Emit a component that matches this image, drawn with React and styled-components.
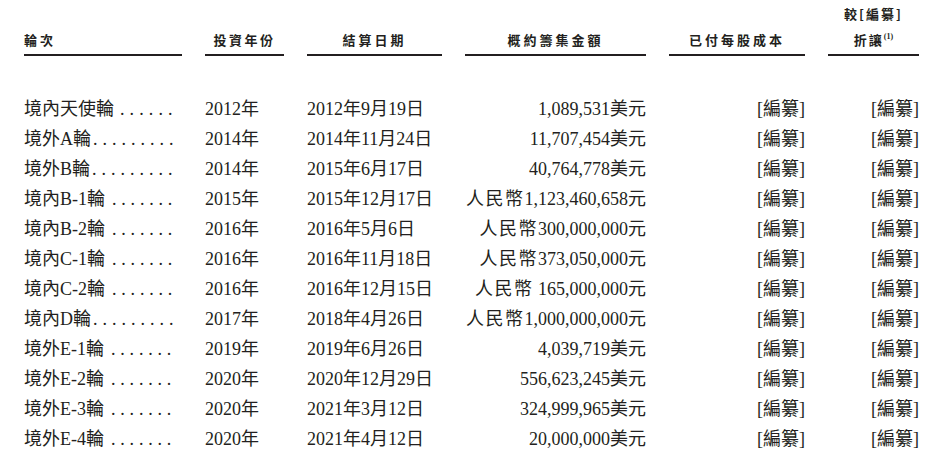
import React from 'react';
import styled, { createGlobalStyle } from 'styled-components';

const GlobalStyle = createGlobalStyle`
    body {
        margin: 0;
        background: #ffffff;
        color: #231f20;
        font-family: "Liberation Serif", "Noto Sans CJK TC", serif;
    }
`

const COLS = '158px 79px 135px 181px 136px 91px';

const Page = styled.div`
    padding: 1px 0 0 24px;
`

const HeaderRow = styled.div`
    display: grid;
    grid-template-columns: ${COLS};
    column-gap: 23px;
    align-items: end;
`

const HeadCell = styled.div`
    border-bottom: 2px solid #231f20;
    padding-bottom: 1px;
    font-family: "Noto Sans CJK TC", sans-serif;
    font-weight: 700;
    font-size: 13px;
    line-height: 26px;
    letter-spacing: ${p => p.$spacing || 3}px;
    text-align: ${p => p.$align || 'center'};
    white-space: nowrap;
`

const Sup = styled.sup`
    font-family: "Liberation Serif", serif;
    font-size: 8px;
    letter-spacing: 0;
    vertical-align: 6px;
    line-height: 0;
`

const Body = styled.div`
    margin-top: 36px;
`

const Row = styled.div`
    display: grid;
    grid-template-columns: ${COLS};
    column-gap: 23px;
    height: 30px;
    align-items: center;
    font-size: 18px;
    white-space: nowrap;
`

const Cell = styled.div`
    text-align: ${p => p.$align || 'left'};
`

const Dots = styled.span`
    margin-left: ${p => p.$gap}px;
    letter-spacing: ${p => p.$spacing}px;
`

const Currency = styled.span`
    letter-spacing: 1.5px;
`

const rows = [
    ['境內天使輪', 6, 6, 5.1, '2012年', '2012年9月19日', '', '1,089,531美元'],
    ['境外A輪', 9, 2, 5, '2014年', '2014年11月24日', '', '11,707,454美元'],
    ['境外B輪', 9, 2, 5, '2014年', '2015年6月17日', '', '40,764,778美元'],
    ['境內B-1輪', 7, 7, 4.8, '2015年', '2015年12月17日', '人民幣', '1,123,460,658元'],
    ['境內B-2輪', 7, 7, 4.8, '2016年', '2016年5月6日', '人民幣', '300,000,000元'],
    ['境內C-1輪', 7, 7, 4.8, '2016年', '2016年11月18日', '人民幣', '373,050,000元'],
    ['境內C-2輪', 7, 7, 4.8, '2016年', '2016年12月15日', '人民幣', ' 165,000,000元'],
    ['境內D輪', 9, 2, 5, '2017年', '2018年4月26日', '人民幣', '1,000,000,000元'],
    ['境外E-1輪', 7, 7, 4.8, '2019年', '2019年6月26日', '', '4,039,719美元'],
    ['境外E-2輪', 7, 7, 4.8, '2020年', '2020年12月29日', '', '556,623,245美元'],
    ['境外E-3輪', 7, 7, 4.8, '2020年', '2021年3月12日', '', '324,999,965美元'],
    ['境外E-4輪', 7, 7, 4.8, '2020年', '2021年4月12日', '', '20,000,000美元'],
];

const App = () => {
    return (
        <Page>
            <GlobalStyle />
            <HeaderRow>
                <HeadCell $align="left">輪次</HeadCell>
                <HeadCell $spacing={2.5}>投資年份</HeadCell>
                <HeadCell>結算日期</HeadCell>
                <HeadCell>概約籌集金額</HeadCell>
                <HeadCell>已付每股成本</HeadCell>
                <HeadCell $spacing={2}>較[編纂]<br />折讓<Sup>(1)</Sup></HeadCell>
            </HeaderRow>
            <Body>
                {rows.map(([name, count, gap, spacing, year, date, currency, amount]) => (
                    <Row key={name}>
                        <Cell>
                            {name}
                            <Dots $gap={gap} $spacing={spacing}>{'.'.repeat(count)}</Dots>
                        </Cell>
                        <Cell>{year}</Cell>
                        <Cell>{date}</Cell>
                        <Cell $align="right">
                            {currency && <Currency>{currency}</Currency>}
                            {amount}
                        </Cell>
                        <Cell $align="right">[編纂]</Cell>
                        <Cell $align="right">[編纂]</Cell>
                    </Row>
                ))}
            </Body>
        </Page>
    );
};

export default App;
